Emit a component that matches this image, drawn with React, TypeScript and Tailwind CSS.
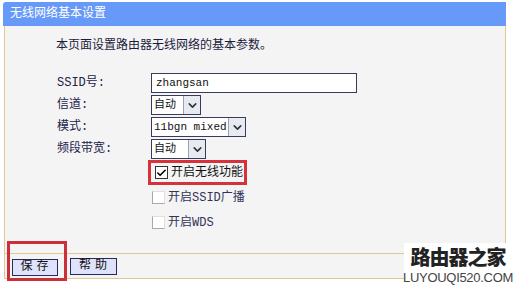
import { Check, ChevronDown } from "lucide-react";

const FONT = { fontFamily: '"Liberation Mono", "Noto Sans CJK SC", monospace' };

const FIELDS = [
  { label: "SSID号:", kind: "input", value: "zhangsan", width: "w-[206px]" },
  { label: "信道:", kind: "select", value: "自动", width: "w-[50px]" },
  { label: "模式:", kind: "select", value: "11bgn mixed", width: "w-[95px]" },
  { label: "频段带宽:", kind: "select", value: "自动", width: "w-[55px]" },
];

const OPTIONS = [
  { label: "开启无线功能", checked: true, marked: true },
  { label: "开启SSID广播", checked: false, marked: false },
  { label: "开启WDS", checked: false, marked: false },
];

const Select = ({ value, width }: { value: string; width: string }) => (
  <div className={`${width} h-[20px] flex border border-[#3a3a5a] bg-white`}>
    <span className="flex-1 flex items-center pl-[2px] text-[11px] text-[#111] whitespace-nowrap">
      {value}
    </span>
    <span className="w-[17px] shrink-0 flex items-center justify-center border-l border-[#9aa0b8] bg-[#e8eaf2]">
      <ChevronDown size={13} strokeWidth={3} className="text-[#333]" />
    </span>
  </div>
);

export default function App() {
  return (
    <div className="w-[513px] h-[289px] bg-white overflow-hidden relative" style={FONT}>
      <div className="ml-[3px] mt-[2px] w-[503px]">
        <div className="h-[24px] bg-[#6699f8] rounded-tl-[3px] flex items-center pl-[7px] text-[12px] text-white">
          无线网络基本设置
        </div>

        <div className="ml-[1px] border-l border-r border-[#e2c88e] bg-[#f4f4f4] h-[227px]">
          <p className="pl-[51px] pt-[13px] h-[46px] text-[12px] leading-[14px] text-[#1c1c3c]">
            本页面设置路由器无线网络的基本参数。
          </p>

          <div className="flex flex-col">
            {FIELDS.map((f) => (
              <div key={f.label} className="h-[22px] flex items-center">
                <span className="w-[146px] pl-[52px] text-[12px] text-[#22224a]">{f.label}</span>
                {f.kind === "input" ? (
                  <div className={`${f.width} h-[20px] border border-[#3a3a5a] bg-white flex items-center pl-[4px] text-[11px] text-[#111]`}>
                    {f.value}
                  </div>
                ) : (
                  <Select value={f.value} width={f.width} />
                )}
              </div>
            ))}
          </div>

          <div className="flex flex-col pl-[143px]">
            {OPTIONS.map((o) => (
              <div
                key={o.label}
                className={`h-[25px] flex items-center gap-[3px] pl-[4px] ${
                  o.marked ? "w-[99px] border-[3px] border-[#d6323c] pl-[1px]" : ""
                }`}
              >
                <span
                  className={`w-[13px] h-[13px] flex items-center justify-center bg-white ${
                    o.checked ? "border border-[#333]" : "border border-[#a8a8a8] border-t-[#e0e0e0] border-r-[#e0e0e0]"
                  }`}
                >
                  {o.checked && <Check size={12} strokeWidth={3.5} className="text-black" />}
                </span>
                <span className={`text-[12px] whitespace-nowrap ${o.checked ? "text-[#111]" : "text-[#33335a]"}`}>
                  {o.label}
                </span>
              </div>
            ))}
          </div>
        </div>

        <div className="ml-[1px] h-[26px] border-t border-b border-l border-[#e2c88e] bg-[#f4f4f4] flex items-center gap-[12px] pl-[7px] w-[402px]">
          <div className="relative">
            <button className="w-[46px] h-[17px] border border-[#2a2a5a] bg-[#dfe2fb] text-[12px] leading-none text-[#111] tracking-[4px] pl-[3px]">
              保存
            </button>
            <span className="absolute left-[-5px] top-[-13px] w-[60px] h-[40px] border-[3px] border-[#cc2f3a]" />
          </div>
          <button className="w-[47px] h-[17px] border border-[#2a2a5a] bg-[#dfe2fb] text-[12px] leading-none text-[#111] tracking-[4px] pl-[3px]">
            帮助
          </button>
        </div>
      </div>

      <div className="absolute left-[404px] top-[243px] w-[108px] pb-[3px] bg-white flex flex-col items-center">
        <span
          className="text-[20px] leading-[27px] font-black text-[#222] tracking-[-1px]"
          style={{ fontFamily: '"Noto Sans CJK SC", sans-serif' }}
        >
          路由器之家
        </span>
        <span
          className="text-[13px] leading-[16px] text-[#444] tracking-[-0.3px]"
          style={{ fontFamily: '"Liberation Sans", sans-serif' }}
        >
          LUYOUQI520.COM
        </span>
      </div>
    </div>
  );
}
